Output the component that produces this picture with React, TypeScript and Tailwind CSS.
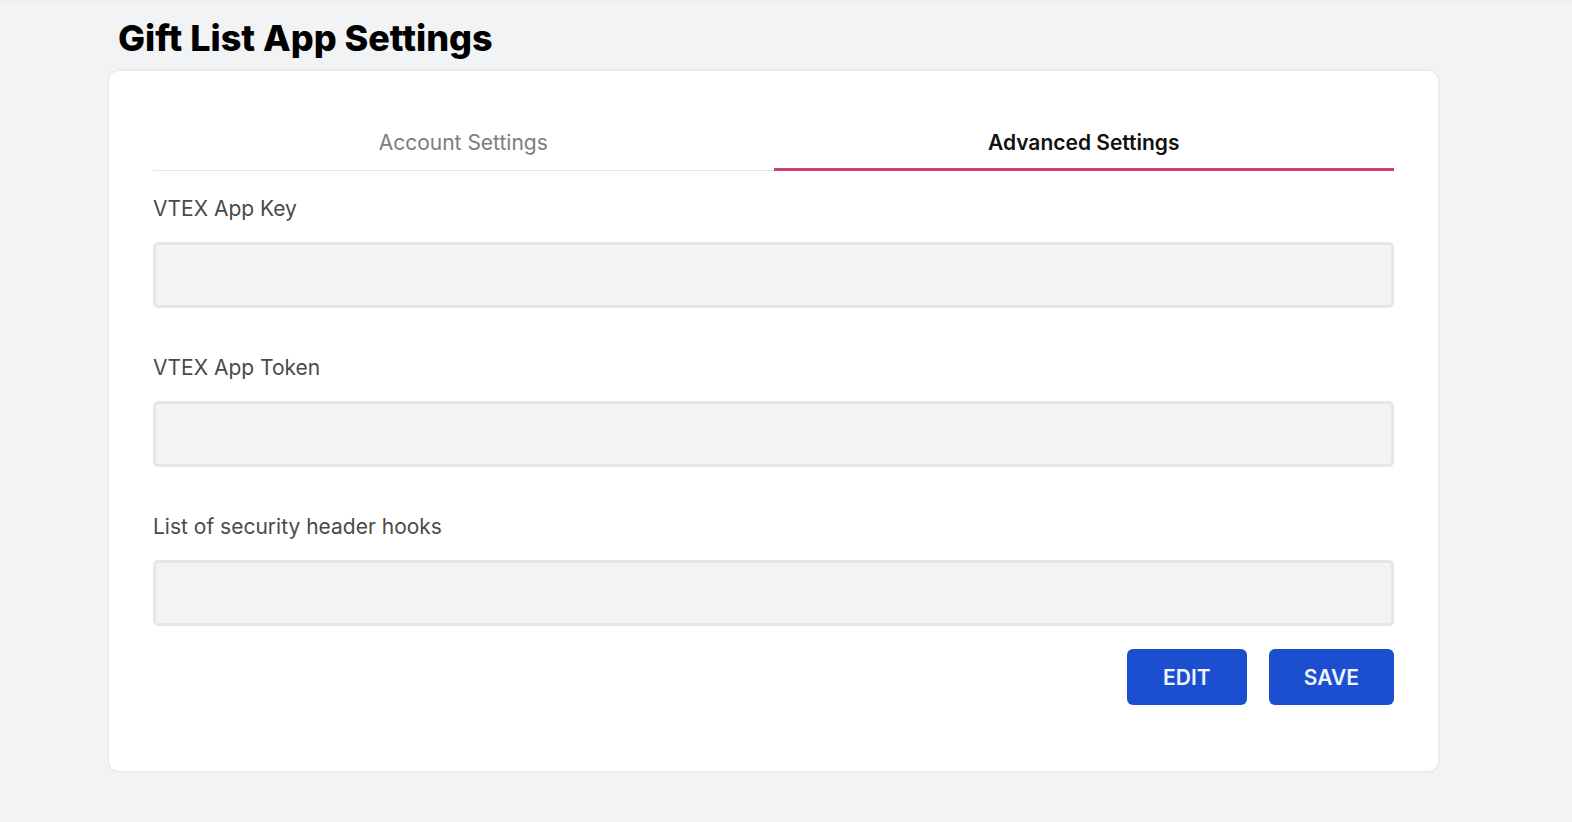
const fields = [
  { id: "app-key", label: "VTEX App Key" },
  { id: "app-token", label: "VTEX App Token" },
  { id: "header-hooks", label: "List of security header hooks" },
];

const tabs = [
  { label: "Account Settings", active: false },
  { label: "Advanced Settings", active: true },
];

const buttonClass =
  "h-14 min-w-[120px] rounded-md bg-[#1c4fd0] px-[35px] pt-0.5 text-[21px] leading-6 font-semibold text-[#f0f4ff]";

export default function App() {
  return (
    <main className="min-h-screen border-t-4 border-[#eff0f2] bg-[#f2f3f5] pr-[132px] pb-12 pl-[107px] font-['Inter',sans-serif]">
      <h1 className="px-[11px] pt-[9px] pb-1.5 text-[36px] leading-[50px] font-extrabold text-black">
        Gift List App Settings
      </h1>
      <section className="rounded-xl border-2 border-[#ebecee] bg-white px-11 pt-11 pb-[66px]">
        <div role="tablist" className="flex">
          {tabs.map((tab) => (
            <button
              key={tab.label}
              type="button"
              role="tab"
              aria-selected={tab.active}
              className={
                tab.active
                  ? "h-14 flex-1 border-b-3 border-[#d13f69] pt-0.5 text-[21px] leading-6 font-semibold text-[#111111]"
                  : "h-14 flex-1 border-b border-[#e6e7e9] text-[21px] leading-6 text-[#7d7d7d]"
              }
            >
              {tab.label}
            </button>
          ))}
        </div>
        <form className="pt-6" onSubmit={(event) => event.preventDefault()}>
          <div className="flex flex-col gap-[46px]">
            {fields.map((field) => (
              <div key={field.id} className="flex flex-col gap-[19px]">
                <label htmlFor={field.id} className="text-[21px] leading-7 text-[#4a4a4a]">
                  {field.label}
                </label>
                <input
                  id={field.id}
                  type="text"
                  readOnly
                  className="h-[66px] w-full rounded-[5px] border-3 border-[#e5e6e8] bg-[#f2f3f5] px-4 text-[21px] text-[#4a4a4a]"
                />
              </div>
            ))}
          </div>
          <div className="flex justify-end gap-[22px] pt-[23px]">
            <button type="button" className={buttonClass}>
              EDIT
            </button>
            <button type="submit" className={buttonClass}>
              SAVE
            </button>
          </div>
        </form>
      </section>
    </main>
  );
}
